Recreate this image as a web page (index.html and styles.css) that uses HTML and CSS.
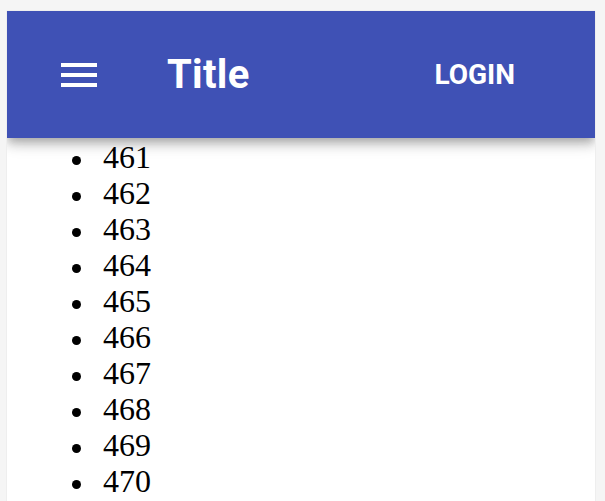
FILE: index.html
```html
<!DOCTYPE html>
<html>
<head>
<meta charset="utf-8">
<link rel="stylesheet" href="styles.css">
</head>
<body>
<div class="frame">
  <header class="appbar">
    <button class="menu-btn" aria-label="Menu">
      <svg width="48" height="48" viewBox="0 0 24 24"><path fill="#fff" d="M3 18h18v-2H3v2zm0-5h18v-2H3v2zm0-7v2h18V6H3z"/></svg>
    </button>
    <h1 class="title">Title</h1>
    <button class="login-btn">Login</button>
  </header>
  <div class="content">
    <ul class="list">
      <li>461</li>
      <li>462</li>
      <li>463</li>
      <li>464</li>
      <li>465</li>
      <li>466</li>
      <li>467</li>
      <li>468</li>
      <li>469</li>
      <li>470</li>
    </ul>
  </div>
</div>
</body>
</html>
```

FILE: styles.css
```css
html, body {
  margin: 0;
  padding: 0;
  height: 100%;
}
body {
  background: #f5f5f5;
  overflow: hidden;
}
.frame {
  margin: 11px 0 0 7px;
  width: 588px;
  height: 490px;
  background: #fff;
  box-shadow: 0 0 1px rgba(0,0,0,0.18);
  overflow: hidden;
}
.appbar {
  position: relative;
  z-index: 1;
  height: 127px;
  box-sizing: border-box;
  padding: 0 48px;
  display: flex;
  align-items: center;
  background: #3f51b5;
  color: #fff;
  box-shadow: 0 4px 8px -2px rgba(0,0,0,0.2), 0 8px 10px 0 rgba(0,0,0,0.14), 0 2px 20px 0 rgba(0,0,0,0.12);
}
.menu-btn {
  width: 96px;
  height: 96px;
  margin: 0 40px 0 -24px;
  padding: 24px;
  border: 0;
  background: none;
  display: flex;
  align-items: center;
  justify-content: center;
}
.menu-btn svg {
  display: block;
}
.title {
  flex: 1;
  margin: 0;
  font-family: Roboto, "Liberation Sans", sans-serif;
  font-weight: 700;
  font-size: 40px;
  line-height: 1.6;
  letter-spacing: 0.0075em;
}
.login-btn {
  padding: 12px 32px;
  min-width: 128px;
  border: 0;
  background: none;
  color: #fff;
  font-family: Roboto, "Liberation Sans", sans-serif;
  font-weight: 700;
  font-size: 28px;
  line-height: 1.75;
  letter-spacing: 0;
  text-transform: uppercase;
}
.content {
  padding: 1px 16px 0;
}
.list {
  margin: 0;
  padding-left: 80px;
  font-family: "Liberation Serif", "Times New Roman", serif;
  font-size: 32px;
  line-height: 36px;
  color: #000;
}
.list li {
  list-style: none;
}
.list li::before {
  content: "";
  display: inline-block;
  width: 9px;
  height: 9px;
  margin-left: -31.5px;
  margin-right: 22.5px;
  border-radius: 50%;
  background: #000;
  vertical-align: middle;
}
```
